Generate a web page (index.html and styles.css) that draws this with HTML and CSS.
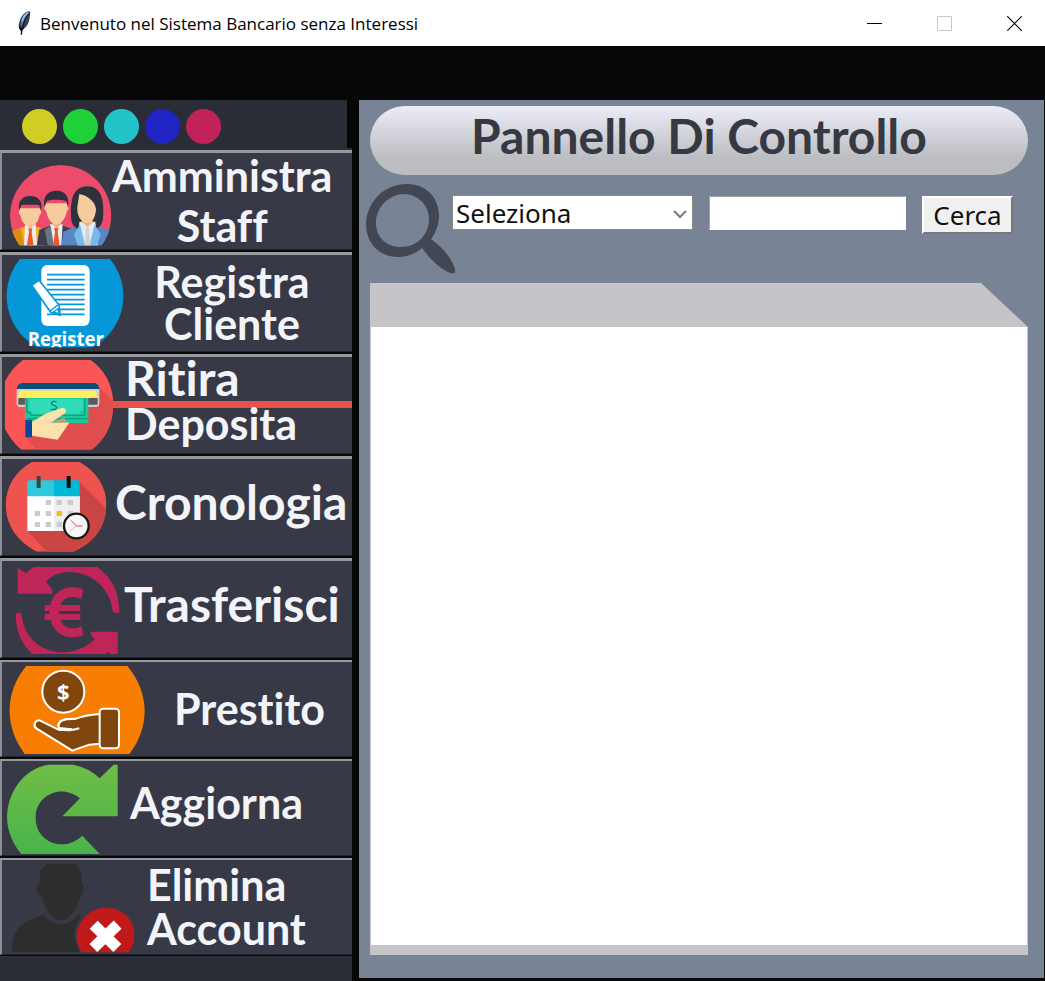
FILE: index.html
```html
<!DOCTYPE html>
<html lang="it">
<head>
<meta charset="utf-8">
<title>Benvenuto nel Sistema Bancario senza Interessi</title>
<link rel="stylesheet" href="styles.css">
</head>
<body>
<header class="titlebar">
  <svg class="feather" viewBox="0 0 48 78" aria-hidden="true">
    <path d="M42 4C29 4 19 14 13 28c-5 11-6 22-3 30l6 2 8-4c9-7 15-19 17-33 1-7 2-13 1-19z" fill="#35414f"/>
    <path d="M38 7C28 11 20 22 16 36l-2 16c8-7 15-18 20-30z" fill="#4b8ed6"/>
    <path d="M36 8c-9 5-15 14-18 25" fill="none" stroke="#a9cdf0" stroke-width="4"/>
    <path d="M37 13C27 27 17 43 16 74" fill="none" stroke="#111" stroke-width="4"/>
    <path d="M10 47l5 14 8-7" fill="none" stroke="#111" stroke-width="4"/>
  </svg>
  <span class="titlebar-text">Benvenuto nel Sistema Bancario senza Interessi</span>
  <div class="window-controls">
    <button type="button" aria-label="Riduci a icona"><svg viewBox="0 0 15 15"><path d="M0 7.500H15" stroke="#000"/></svg></button>
    <button type="button" aria-label="Ingrandisci" disabled><svg viewBox="0 0 15 15"><path d="M.5.5h14v14H.5z" fill="none" stroke="#c8c8c8"/></svg></button>
    <button type="button" aria-label="Chiudi"><svg viewBox="0 0 15 15"><path d="M.3.3l14.400 14.400M14.700.3L.3 14.700" stroke="#000" stroke-width="1.200"/></svg></button>
  </div>
</header>

<div class="app">
  <nav class="sidebar">
    <div class="dots">
      <i class="dot yellow"></i><i class="dot green"></i><i class="dot cyan"></i><i class="dot blue"></i><i class="dot pink"></i>
    </div>

    <button type="button" class="menu-item">
      <svg class="icon w110" viewBox="6 24 330 288" aria-hidden="true">
        <defs><clipPath id="c1"><path d="M0 0H400V301H0z"/></clipPath>
        <clipPath id="c1b"><circle cx="182" cy="212" r="152"/></clipPath></defs>
        <g clip-path="url(#c1)"><g clip-path="url(#c1b)">
          <circle cx="182" cy="212" r="152" fill="#ec4b6a"/>
          <path d="M28 262l48-18h32l26 10v50H28z" fill="#f2b01e"/>
          <path d="M28 262l34-12 12 54H28z" fill="#df8c0e"/>
          <path d="M75 238h32l4 66H72z" fill="#e9edf0"/>
          <path d="M85 250h12l-2 12 6 42H80l7-42z" fill="#f1552c"/>
          <path d="M78 222h24v18l-12 10-12-10z" fill="#e9b27b"/>
          <path d="M60 190h60l4 14-6 8c-3 18-14 32-28 32s-25-14-28-32l-6-8z" fill="#f6cc9f"/>
          <path d="M58 196c-6-24 6-43 33-43s38 19 32 43l-6-16-12-1H76l-12 1z" fill="#2d323c"/>
          <path d="M110 304l8-50 38-14h28l38 14v50z" fill="#3b404c"/>
          <path d="M150 238h38l-4 66h-28z" fill="#e9edf0"/>
          <path d="M162 248h14l-3 12 6 44h-20l6-44z" fill="#f1552c"/>
          <path d="M134 254l18-12 10 62h-18z" fill="#6c7482"/>
          <path d="M157 218h26v20l-13 12-13-12z" fill="#e9b27b"/>
          <path d="M138 175h62l6 16-6 9c-4 21-16 38-31 38s-26-17-30-38l-7-9z" fill="#f6cc9f"/>
          <path d="M134 186c-7-29 7-49 35-49s41 20 35 49l-5-18c-16-5-44-5-59 0z" fill="#2d323c"/>
          <path d="M184 304l6-44 34-14h76l36 12v46z" fill="#5b86c4"/>
          <path d="M214 225c-3-20-2-40 2-60 5-26 22-41 46-41s40 14 45 41c4 21 4 40 1 60-3 18-16 30-45 36-30-3-46-16-49-36z" fill="#2d323c"/>
          <path d="M238 230h48l8 74h-60z" fill="#e6e9ee"/>
          <path d="M246 216h32v16l-16 14-16-14z" fill="#edb57a"/>
          <path d="M238 147c24 5 45 20 50 44 0 20-10 43-26 43-20 0-32-24-30-48z" fill="#f6cc9f"/>
          <path d="M222 268l18-30 16 66h-22zM302 268l-18-30-16 66h22z" fill="#7ab8e8"/>
          <path d="M258 246h8l6 58h-18z" fill="#cfd2d6"/>
        </g></g>
      </svg>
      <span class="label roomy">Amministra<br>Staff</span>
    </button>

    <button type="button" class="menu-item">
      <svg class="icon w122" viewBox="6 15 366 288" aria-hidden="true">
        <defs><clipPath id="c2"><path d="M0 27H400V292H0z"/></clipPath></defs>
        <g clip-path="url(#c2)">
          <circle cx="195" cy="138" r="175" fill="#0697d9"/>
          <rect x="124" y="45" width="145" height="183" rx="18" fill="#fff"/>
          <path d="M141 74h113M141 89h113M141 104h113M141 119h113M141 134h113M141 149h113M170 163h84M176 178h78M141 193h113" stroke="#0697d9" stroke-width="5"/>
          <path d="M95 106l22-15 60 74 3 30-28-8z" fill="#fff" stroke="#0697d9" stroke-width="5"/>
          <path d="M151 183l22-18M160 186l14-10 4 16z" fill="none" stroke="#0697d9" stroke-width="4"/>
          <text x="83" y="287" class="register-text">Register</text>
        </g>
      </svg>
      <span class="label snug">Registra<br>Cliente</span>
    </button>

    <button type="button" class="menu-item">
      <svg class="icon w111" viewBox="6 21 333 288" aria-hidden="true">
        <defs><clipPath id="c3"><path d="M70 29H271Q339 78 340 164 338 252 275 299H64Q33 272 15 236V94Q34 54 70 29z"/></clipPath></defs>
        <g clip-path="url(#c3)">
          <path d="M0 0H350V310H0z" fill="#fb5555"/>
          <path d="M298 112l60 60v140H122l-46-51 80-50z" fill="#e14d4d"/>
          <path d="M50 120c0-14 8-21 20-21h210c12 0 18 8 18 21z" fill="#075079"/>
          <path d="M50 117h248v42q0 12-10 12H60q-10 0-10-12z" fill="#d0ced0"/>
          <path d="M55 144h238v20H55z" fill="#5c5a60"/>
          <path d="M60 122h228l4 22H52z" fill="#fff05c"/>
          <path d="M75 144h190v75H75z" fill="#1fc99f"/>
          <path d="M88 147h162v32q-12 3-14 12H100q-2-8-12-12z" fill="#31dbb8"/>
          <path d="M80 144v42q12 2 14 10h160v-52M82 206h180" fill="none" stroke="#08a47d" stroke-width="4"/>
          <text x="151" y="181" class="bill-sign">S</text>
          <path d="M150 219l42-16 12 18-18 14z" fill="#bba274"/>
          <path d="M95 216l42-25 48-17c13-2 17 10 8 17l-42 28 57-1-35 51-78-12z" fill="#fee0aa"/>
          <path d="M76 209h20v53H76z" fill="#0a449c"/>
        </g>
      </svg>
      <span class="label split"><span class="split-top">Ritira</span><span class="split-bottom">Deposita</span></span>
    </button>

    <button type="button" class="menu-item">
      <svg class="icon w111" viewBox="6 21 333 288" aria-hidden="true">
        <defs><clipPath id="c4"><path d="M97 29H238Q318 76 319 157 318 256 220 299H110Q18 250 17 157 20 72 97 29z"/></clipPath></defs>
        <g clip-path="url(#c4)">
          <path d="M0 0H350V310H0z" fill="#ef5350"/>
          <path d="M239 90l90 90v130H150l-68-73z" fill="#c94644"/>
        </g>
        <path d="M82 132h157v105H82z" fill="#fff"/>
        <path d="M162 132h77v105h-77z" fill="#efefef"/>
        <path d="M82 92q0-7 7-7h73v48H82z" fill="#30c8dc"/>
        <path d="M162 85h70q7 0 7 7v41h-77z" fill="#00b9d6"/>
        <path d="M116 72v36" stroke="#424242" stroke-width="12"/><path d="M206 72v36" stroke="#111" stroke-width="12"/>
        <path d="M137 144h16v15h-16zM170 144h16v15h-16zM203 144h16v15h-16zM104 177h16v15h-16zM137 177h16v15h-16zM203 177h16v15h-16zM104 210h16v15h-16zM137 210h16v15h-16zM170 210h16v15h-16z" fill="#cbcbcb"/>
        <path d="M170 177h16v15h-16z" fill="#fbbd09"/>
        <circle cx="229" cy="222" r="37" fill="#f6f6f6" stroke="#171717" stroke-width="7"/>
        <path d="M213 205l16 17h18" fill="none" stroke="#e54848" stroke-width="3"/><path d="M229 222l-20 15" stroke="#cfcfcf" stroke-width="3"/>
      </svg>
      <span class="label start large raised">Cronologia</span>
    </button>

    <button type="button" class="menu-item">
      <svg class="icon w120" viewBox="6 18 360 288" aria-hidden="true">
        <g fill="#c02559">
          <path d="M53 40l25 14q12-13 24-18h190c40 30 64 68 66 132 0 8-18 8-20 0-7-68-63-117-129-117-30 0-52 9-71 29l19 24v12H53z"/>
          <path d="M47 181c0-11 17-11 18-1 5 65 56 112 125 112 36 0 68-14 94-39l-12-14v-9h81v67h-24l-6-6-7 6H97C64 267 48 230 47 181z"/>
          <path d="M134 150h17c8-35 36-53 68-53 12 0 21 2 31 7l-6 29c-8-5-16-7-26-7-18 0-30 8-36 24h59v18h-64v9h64v18h-59c6 16 19 25 37 25 10 0 18-2 25-7l6 28c-10 4-19 6-31 6-32 0-59-18-67-52h-18v-18h14v-9h-14z"/>
        </g>
      </svg>
      <span class="label start large raised">Trasferisci</span>
    </button>

    <button type="button" class="menu-item slim">
      <svg class="icon w145" viewBox="6 21 435 282" aria-hidden="true">
        <path d="M79 33H382C448 112 452 214 388 297H74C12 214 14 110 79 33z" fill="#f77e03"/>
        <g fill="#80460d" stroke="#fff" stroke-width="6" stroke-linejoin="round">
          <circle cx="190" cy="110" r="63"/>
          <path d="M119 196c-16 0-20 17-9 25l107 66 51-18 32-3v-89c-26 2-48 4-72 14-17 2-47-2-53 18l2 10 38 4-6 3-34-2z"/>
          <path d="M174 214c3-14 10-20 24-22l30-1M180 224h40l18-4" fill="none"/>
          <rect x="299" y="161" width="58" height="119" rx="10"/>
        </g>
        <text x="190" y="134" class="coin-sign">$</text>
      </svg>
      <span class="label">Prestito</span>
    </button>

    <button type="button" class="menu-item slim">
      <svg class="icon w128" viewBox="6 18 384 282" aria-hidden="true">
        <defs><linearGradient id="g7" x2="0" y2="1"><stop stop-color="#70bd45"/><stop offset="1" stop-color="#49b44a"/></linearGradient></defs>
        <path d="M145 29H220Q266 38 299 70L341 29H353V184H187L240 130C186 84 106 119 107 188 106 262 193 295 247 242L299 297H64C7 226 12 150 50 92Q86 39 145 29z" fill="url(#g7)"/>
      </svg>
      <span class="label start raised">Aggiorna</span>
    </button>

    <button type="button" class="menu-item slim">
      <svg class="icon w145" viewBox="6 24 435 282" aria-hidden="true">
        <path d="M138 36h91l15 26 2 35c9 6 7 31-5 36-8 30-25 65-55 73-33-1-52-37-60-73-16-6-20-26-8-39l2-37z" fill="#2d2d2d"/>
        <path d="M130 188c27 37 76 37 104 0l10 4c-23 31-29 63-5 108H42c-6 0-9-3-7-12 6-64 37-80 95-100z" fill="#2d2d2d"/>
        <path d="M246 301c-28-34-17-86 15-112 33-30 91-29 122 6 27 31 26 76 4 106z" fill="#bf1a19"/>
        <path d="M281 218l71 70M353 218l-73 70" stroke="#fff" stroke-width="34"/>
      </svg>
      <span class="label start">Elimina<br>Account</span>
    </button>
  </nav>

  <main class="panel">
    <h1 class="panel-title">Pannello Di Controllo</h1>
    <form class="search">
      <svg class="lens" viewBox="0 0 86 90" aria-hidden="true">
        <path fill-rule="evenodd" d="M41 0c21 0 33 16 32 34-1 9-4 16-8 21 12 9 20 18 24 30 1 4-1 5-5 4-10-4-20-14-28-25-7 6-15 9-24 9C14 73 1 60 0 42 0 18 18 0 41 0zm-4 10C22 11 10 24 10 39c0 14 10 24 25 24 17 0 28-13 28-28 0-14-11-25-26-25z" fill="#424753"/>
      </svg>
      <div class="select-wrap">
        <select aria-label="Criterio di ricerca"><option>Seleziona</option></select>
        <svg class="chevron" viewBox="0 0 14 9" aria-hidden="true"><path d="M1 1l6 6 6-6" fill="none" stroke="#7a7a7a" stroke-width="2"/></svg>
      </div>
      <input type="text" aria-label="Testo da cercare">
      <button type="button" class="search-button">Cerca</button>
    </form>
    <section class="sheet" aria-label="Risultati"><div class="results"></div></section>
  </main>
</div>
</body>
</html>
```
FILE: styles.css
```css
* { box-sizing: border-box; }

body {
  margin: 0;
  min-height: 100vh;
  display: flex;
  flex-direction: column;
  background: #070707;
  font-family: "Noto Sans", sans-serif;
}

.titlebar {
  height: 46px;
  display: flex;
  align-items: center;
  padding: 0 16px;
  background: #fff;
  color: #000;
}

.feather { width: 16px; height: 26px; margin-right: 8px; }
.titlebar-text { flex: 1; font: 17px "Open Sans", sans-serif; }
.window-controls { display: flex; gap: 40px; }
.window-controls button {
  width: 30px;
  height: 30px;
  padding: 0;
  border: 0;
  background: none;
  display: flex;
  align-items: center;
  justify-content: center;
}
.window-controls svg { width: 15px; height: 15px; }

.app {
  flex: 1;
  display: flex;
  gap: 7px;
  padding-top: 54px;
}

.sidebar {
  width: 352px;
  display: flex;
  flex-direction: column;
  gap: 2px;
  background: linear-gradient(#070707, #070707) 0 50px / 100% 806px no-repeat, #2a2d36;
}

.dots {
  height: 48px;
  display: flex;
  align-items: center;
  gap: 6px;
  padding: 4px 0 0 22px;
  border-right: 5px solid #070707;
}
.dot { width: 35px; height: 35px; border-radius: 50%; }
.yellow { background: #d0cd24; }
.green { background: #1fd139; }
.cyan { background: #22c4ca; }
.blue { background: #2024c3; }
.pink { background: #c02259; }

.menu-item {
  height: 100px;
  display: flex;
  align-items: stretch;
  padding: 0;
  border: solid;
  border-width: 3px 0 1px 2px;
  border-color: #98999e #22242c #22242c #8d8f95;
  background: #373a46;
  color: #f3f4f9;
  font: bold 43px/44px Lato, sans-serif;
  font-variant-ligatures: none;
}
.slim { height: 97px; border-top-width: 2px; }

.icon { flex: none; height: 100%; }
.w110 { width: 110px; }
.w111 { width: 111px; }
.w120 { width: 120px; }
.w122 { width: 122px; }
.w128 { width: 128px; }
.w145 { width: 145px; }

.label { flex: 1; align-self: center; text-align: center; white-space: nowrap; }
.roomy { padding-right: 20px; line-height: 50px; }
.snug { padding-right: 12px; line-height: 42px; }
.start { text-align: left; }
.large { padding-left: 2px; font-size: 48px; }
.raised { padding-bottom: 10px; }
.split { align-self: flex-start; display: flex; flex-direction: column; text-align: left; }
.split-top { padding-left: 12px; font-size: 48px; line-height: 42px; padding-bottom: 2px; }
.split-bottom { padding-left: 12px; border-top: 7px solid #e8504d; line-height: 32px; }

.register-text { font: bold 56px "Open Sans", sans-serif; fill: #fff; }
.bill-sign { font: 40px "Open Sans", sans-serif; fill: #146b58; }
.coin-sign { font: bold 66px "Open Sans", sans-serif; fill: #fff; text-anchor: middle; }

.panel {
  flex: 1;
  display: flex;
  flex-direction: column;
  margin: 0 1px 3px 0;
  padding: 6px 16px 23px 11px;
  background: #788396;
}

.panel-title {
  margin: 0;
  height: 69px;
  border-radius: 35px;
  background: linear-gradient(#ececf7, #bcbec2 75%, #bbbdc0);
  color: #363942;
  font: bold 48px/60px Lato, sans-serif;
  text-align: center;
}

.search {
  display: flex;
  align-items: flex-start;
  gap: 16px;
  margin: 9px 15px 9px -4px;
}
.lens { width: 86px; height: 90px; margin-right: -16px; overflow: visible; }
.select-wrap { flex: 31; position: relative; margin-top: 11px; min-width: 0; }
.select-wrap select {
  width: 100%;
  height: 35px;
  padding: 0 3px;
  appearance: none;
  border: 1px solid #8b8782;
  border-radius: 0;
  background: #fff;
  color: #111;
  font: 26px/30px "Noto Sans", sans-serif;
}
.chevron { position: absolute; right: 6px; top: 15px; width: 14px; height: 9px; }
.search input {
  flex: 25;
  min-width: 0;
  height: 34px;
  margin-top: 12px;
  padding: 0;
  border: 1px solid #fff;
  border-top-color: #a0a0a0;
  border-left-color: #a0a0a0;
  background: #fff;
  font: 26px "Noto Sans", sans-serif;
}
.search-button {
  width: 91px;
  height: 38px;
  margin-top: 12px;
  padding: 0;
  border: 2px solid;
  border-color: #fff #777 #777 #fff;
  background: #f0f0f0;
  color: #111;
  font: 26px/30px "Noto Sans", sans-serif;
}

.sheet {
  flex: 1;
  display: flex;
  padding: 44px 1px 10px;
  background: #c5c5c9;
  clip-path: polygon(0 0, calc(100% - 47px) 0, 100% 44px, 100% 100%, 0 100%);
}
.results { flex: 1; background: #fff; }
```
